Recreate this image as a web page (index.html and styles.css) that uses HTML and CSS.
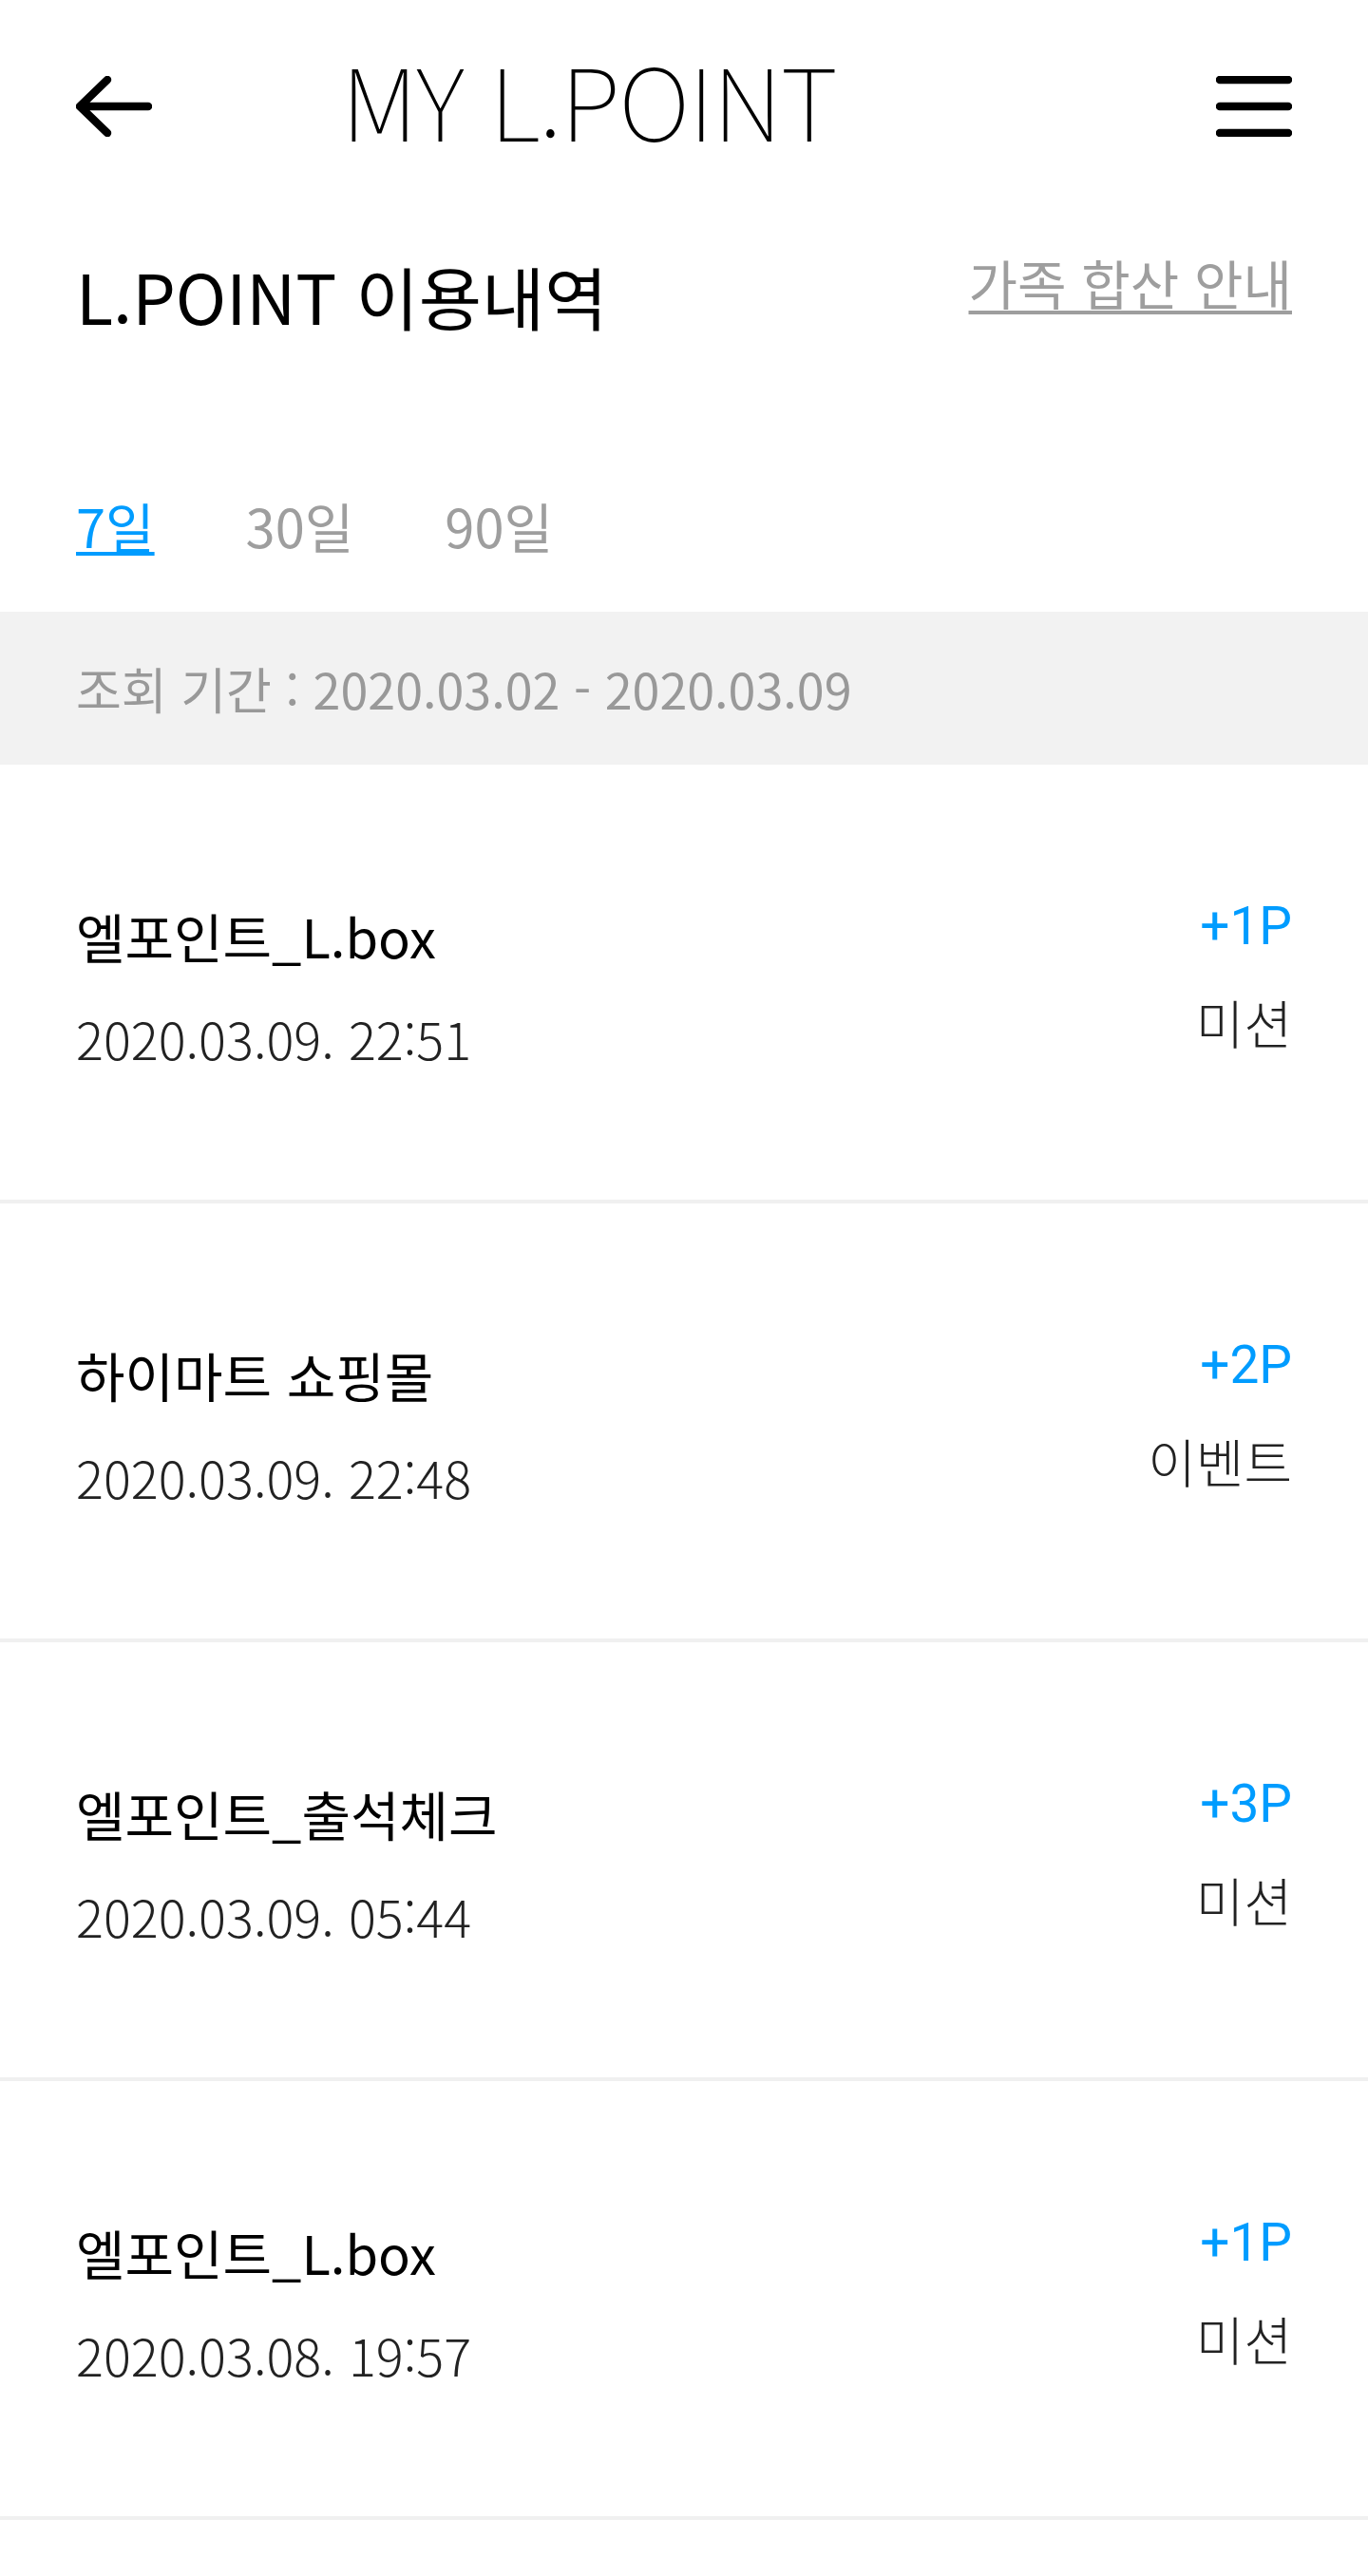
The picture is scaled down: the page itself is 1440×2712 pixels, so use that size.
FILE: index.html
```html
<!DOCTYPE html>
<html lang="ko">
<head>
  <meta charset="UTF-8">
  <meta name="viewport" content="width=device-width, initial-scale=1.0">
  <title>MY L.POINT</title>
  <link rel="stylesheet" href="styles.css">
</head>
<body>
  <header class="topbar">
    <button class="icon-btn" aria-label="뒤로">
      <svg width="80" height="64" viewBox="0 0 80 64">
        <path d="M4 32 H76 M33 4 L4 32 L33 60" fill="none" stroke="#000" stroke-width="8.5" stroke-linecap="round" stroke-linejoin="round"/>
      </svg>
    </button>
    <h1 class="topbar-title">MY L.POINT</h1>
    <button class="icon-btn" aria-label="메뉴">
      <svg width="80" height="64" viewBox="0 0 80 64">
        <path d="M4 4 H76 M4 32 H76 M4 60 H76" fill="none" stroke="#000" stroke-width="8.5" stroke-linecap="round"/>
      </svg>
    </button>
  </header>

  <section class="usage-head">
    <h2>L.POINT 이용내역</h2>
    <a href="#" class="family-link">가족 합산 안내</a>
  </section>

  <nav class="period-tabs">
    <a href="#" class="tab active">7일</a>
    <a href="#" class="tab">30일</a>
    <a href="#" class="tab">90일</a>
  </nav>

  <div class="period-range">조회 기간 : 2020.03.02 - 2020.03.09</div>

  <ul class="history">
    <li class="history-row">
      <div class="history-info">
        <p class="history-name">엘포인트_L.box</p>
        <p class="history-date">2020.03.09. 22:51</p>
      </div>
      <div class="history-point">
        <p class="point-value">+1P</p>
        <p class="point-type">미션</p>
      </div>
    </li>
    <li class="history-row">
      <div class="history-info">
        <p class="history-name">하이마트 쇼핑몰</p>
        <p class="history-date">2020.03.09. 22:48</p>
      </div>
      <div class="history-point">
        <p class="point-value">+2P</p>
        <p class="point-type">이벤트</p>
      </div>
    </li>
    <li class="history-row">
      <div class="history-info">
        <p class="history-name">엘포인트_출석체크</p>
        <p class="history-date">2020.03.09. 05:44</p>
      </div>
      <div class="history-point">
        <p class="point-value">+3P</p>
        <p class="point-type">미션</p>
      </div>
    </li>
    <li class="history-row">
      <div class="history-info">
        <p class="history-name">엘포인트_L.box</p>
        <p class="history-date">2020.03.08. 19:57</p>
      </div>
      <div class="history-point">
        <p class="point-value">+1P</p>
        <p class="point-type">미션</p>
      </div>
    </li>
  </ul>
</body>
</html>
```

FILE: styles.css
```css
body {
  margin: 0;
  background: #fff;
  color: #000;
  font-family: "Noto Sans CJK KR", "Noto Sans", sans-serif;
}
p, h1, h2, ul {
  margin: 0;
  padding: 0;
}
a {
  color: inherit;
  text-decoration: none;
}
.topbar {
  display: flex;
  align-items: center;
  height: 224px;
  padding: 0 80px;
}
.icon-btn {
  display: flex;
  padding: 0;
  border: none;
  background: none;
  cursor: pointer;
}
.topbar-title {
  flex: 1;
  margin: 0 0 18px 199px;
  font-size: 105px;
  font-weight: 100;
  line-height: 105px;
  letter-spacing: -1.5px;
}
.usage-head {
  display: flex;
  justify-content: space-between;
  align-items: flex-start;
  padding: 51px 80px 0;
}
.usage-head h2 {
  font-size: 72px;
  font-weight: 400;
  line-height: 72px;
}
.family-link {
  margin-top: -6px;
  font-size: 56px;
  line-height: 56px;
  color: #9e9e9e;
  text-decoration: underline;
  text-decoration-thickness: 4px;
  text-underline-offset: 6px;
}
.period-tabs {
  display: flex;
  gap: 96px;
  padding: 178px 80px 0;
  margin-bottom: 63px;
}
.tab {
  font-size: 56px;
  line-height: 56px;
  color: #9e9e9e;
}
.tab.active {
  color: #009cff;
  text-decoration: underline;
  text-decoration-thickness: 4px;
  text-underline-offset: 4px;
}
.period-range {
  display: flex;
  align-items: center;
  height: 161px;
  padding: 0 80px;
  background: #f2f2f2;
  color: #999;
  font-size: 52px;
}
.history {
  list-style: none;
}
.history-row {
  display: flex;
  justify-content: space-between;
  align-items: center;
  height: 458px;
  padding: 0 80px;
  border-bottom: 4px solid #f0f0f0;
}
.history-info {
  margin-top: 10px;
}
.history-name {
  font-size: 56px;
  line-height: 72px;
}
.history-date {
  margin-top: 36px;
  font-size: 54px;
  font-weight: 300;
  line-height: 72px;
  color: #222;
}
.history-point {
  margin-bottom: 18px;
  text-align: right;
}
.point-value {
  font-family: Roboto, "Noto Sans", sans-serif;
  font-size: 55px;
  line-height: 66px;
  color: #009cff;
}
.point-type {
  margin-top: 34px;
  font-size: 55px;
  font-weight: 300;
  line-height: 66px;
  color: #222;
}
```
